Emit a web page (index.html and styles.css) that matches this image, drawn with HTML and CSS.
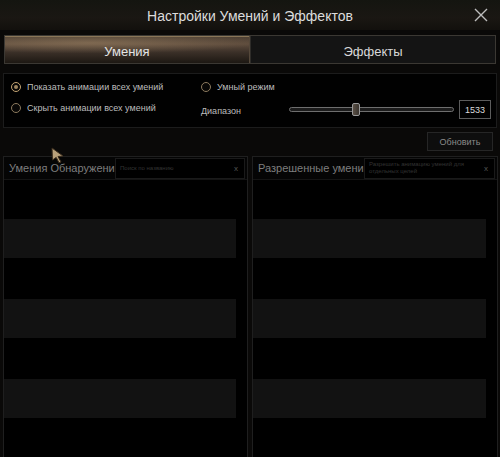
FILE: index.html
```html
<!DOCTYPE html>
<html lang="ru">
<head>
  <meta charset="UTF-8">
  <meta name="viewport" content="width=device-width, initial-scale=1">
  <title>Настройки Умений и Эффектов</title>
  <link rel="stylesheet" href="styles.css">
</head>
<body>
  <div class="window">

    <header class="titlebar">
      <span></span>
      <div class="title">Настройки Умений и Эффектов</div>
      <button class="close" aria-label="Закрыть">
        <svg width="14" height="14" viewBox="0 0 14 14">
          <path d="M1 1 L13 13 M13 1 L1 13" stroke="#bdbdbd" stroke-width="1.4" fill="none"/>
        </svg>
      </button>
    </header>

    <div class="tabs">
      <div class="tab active">Умения</div>
      <div class="tab">Эффекты</div>
    </div>

    <div class="options">
      <div class="opt-col">
        <label class="radio"><span class="dot checked"></span>Показать анимации всех умений</label>
        <label class="radio"><span class="dot"></span>Скрыть анимации всех умений</label>
      </div>
      <div class="opt-col right">
        <label class="radio"><span class="dot"></span>Умный режим</label>
        <div class="range-row">
          <span class="range-label">Диапазон</span>
          <div class="slider">
            <div class="track"></div>
            <div class="thumb" style="left: 38%"></div>
          </div>
          <div class="value">1533</div>
        </div>
      </div>
    </div>

    <div class="refresh-row">
      <button class="refresh">Обновить</button>
    </div>

    <div class="panels">
      <div class="panel">
        <div class="panel-head">
          <span class="panel-title">Умения Обнаружени</span>
          <div class="search">
            <span class="placeholder">Поиск по названию</span>
            <span class="clear">x</span>
          </div>
        </div>
        <div class="list" id="list-left"></div>
      </div>
      <div class="panel">
        <div class="panel-head">
          <span class="panel-title">Разрешенные умени</span>
          <div class="search">
            <span class="placeholder">Разрешить анимацию умений для отдельных целей</span>
            <span class="clear">x</span>
          </div>
        </div>
        <div class="list" id="list-right"></div>
      </div>
    </div>

    <!-- курсор мыши поверх окна -->
    <svg class="cursor" width="14" height="16" viewBox="0 0 14 16">
      <path d="M1 1 L12 9 L7 9.5 L10 15 L8 15.8 L5.2 10.4 L1.5 13 Z" fill="#b8a07a" stroke="#3a2c1c" stroke-width="1"/>
    </svg>
  </div>

  <script>
    // пустые строки списков
    ["list-left", "list-right"].forEach(id => {
      const list = document.getElementById(id);
      for (let i = 0; i < 3; i++) {
        const row = document.createElement("div");
        row.className = "row";
        list.appendChild(row);
      }
    });
  </script>
</body>
</html>
```

FILE: styles.css
```css
body {
  margin: 0;
  background-color: #000;
  font-family: 'Liberation Sans', Arial, sans-serif;
  color: #cfcfcf;
}

.window {
  position: relative;
  width: 500px;
  height: 457px;
  overflow: hidden;
  background-color: #0a0908;
}

.titlebar {
  height: 30px;
  display: grid;
  grid-template-columns: 1fr auto 1fr;
  align-items: center;
  background: linear-gradient(to bottom, #141510 0%, #1a1713 60%, #12100d 100%);
}

.title {
  font-size: 14px;
  color: #dcdcdc;
  padding-top: 1px;
}

.close {
  justify-self: end;
  margin-right: 12px;
  background: none;
  border: none;
  padding: 0;
  display: flex;
}

.tabs {
  display: flex;
  height: 27px;
  margin: 5px 4px 0 4px;
  border: 1px solid #3b3833;
  background-color: #141414;
}

.tab {
  flex: 1;
  display: flex;
  align-items: center;
  justify-content: center;
  padding-top: 4px;
  font-size: 13px;
  color: #d8d8d8;
}

.tab + .tab {
  border-left: 1px solid #2e2c29;
}

.tab.active {
  color: #e4e4e4;
  border-right: 1px solid #55483a;
  background:
    radial-gradient(ellipse 70% 40% at 35% 25%, rgba(190, 160, 120, 0.35), transparent),
    linear-gradient(to bottom, #4b3e32 0%, #5e4c3d 30%, #3b3028 60%, #1d1813 100%);
  box-shadow: inset 0 1px 0 #8a7658;
}

.options {
  display: flex;
  height: 53px;
  margin: 9px 3px 0 3px;
  border: 1px solid #1c1c1c;
  background-color: #010101;
}

.opt-col {
  display: flex;
  flex-direction: column;
  justify-content: space-between;
  padding: 8px 0 14px 7px;
  width: 190px;
}

.opt-col.right {
  flex: 1;
  width: auto;
  padding-left: 0;
  padding-bottom: 8px;
}

.radio {
  display: flex;
  align-items: center;
  font-size: 9px;
  color: #bdbdbd;
}

.dot {
  width: 8px;
  height: 8px;
  border: 1px solid #8c7a5e;
  border-radius: 50%;
  margin-right: 6px;
  background-color: #080706;
  display: flex;
  align-items: center;
  justify-content: center;
}

.dot.checked {
  border-color: #c4a472;
}

.dot.checked::after {
  content: "";
  width: 4px;
  height: 4px;
  border-radius: 50%;
  background-color: #a08660;
}

.range-row {
  display: flex;
  align-items: center;
}

.range-label {
  width: 88px;
  font-size: 9px;
  color: #bdbdbd;
  padding-top: 3px;
}

.slider {
  position: relative;
  width: 165px;
  height: 14px;
  display: flex;
  align-items: center;
}

.track {
  width: 100%;
  height: 3px;
  border: 1px solid #6e6e6e;
  border-radius: 3px;
  background-color: #1b1b1b;
}

.thumb {
  position: absolute;
  top: 0;
  width: 6px;
  height: 11px;
  border: 1px solid #9a9a9a;
  border-radius: 2px;
  background: linear-gradient(to right, #5a5046, #3a342e);
}

.value {
  margin-left: 5px;
  width: 30px;
  height: 17px;
  border: 1px solid #5c5c5c;
  font-size: 9px;
  color: #dcdcdc;
  display: flex;
  align-items: center;
  justify-content: center;
}

.refresh-row {
  display: flex;
  justify-content: flex-end;
  padding: 4px 7px 0 0;
}

.refresh {
  width: 66px;
  height: 19px;
  background-color: #0e0e0e;
  border: 1px solid #262626;
  font-family: 'Liberation Sans', Arial, sans-serif;
  font-size: 9px;
  color: #8a8a8a;
  padding: 0;
}

.panels {
  display: grid;
  grid-template-columns: 245px 246px;
  gap: 4px;
  margin: 5px 3px 0 3px;
}

.panel {
  height: 310px;
  border: 1px solid #1f1f1f;
  background-color: #000;
}

.panel-head {
  display: flex;
  align-items: center;
  height: 22px;
  border-bottom: 1px solid #141414;
  background-color: #050505;
  padding-left: 5px;
}

.panel-title {
  font-size: 11px;
  color: #7e7e7e;
  width: 106px;
  white-space: nowrap;
}

.search {
  flex: 1;
  min-width: 0;
  height: 19px;
  margin-right: 2px;
  display: flex;
  align-items: center;
  border: 1px solid #1a1a1a;
  background-color: #000;
  padding: 0 6px 0 4px;
}

.placeholder {
  flex: 1;
  min-width: 0;
  font-size: 6px;
  line-height: 7px;
  color: #333;
}

.clear {
  margin-left: 4px;
  font-size: 8px;
  color: #555;
}

.list {
  display: flex;
  flex-direction: column;
  gap: 41px;
  padding: 39px 11px 0 0;
}

.row {
  height: 39px;
  background-color: #121212;
}

.cursor {
  position: absolute;
  left: 51px;
  top: 147px;
}
```
